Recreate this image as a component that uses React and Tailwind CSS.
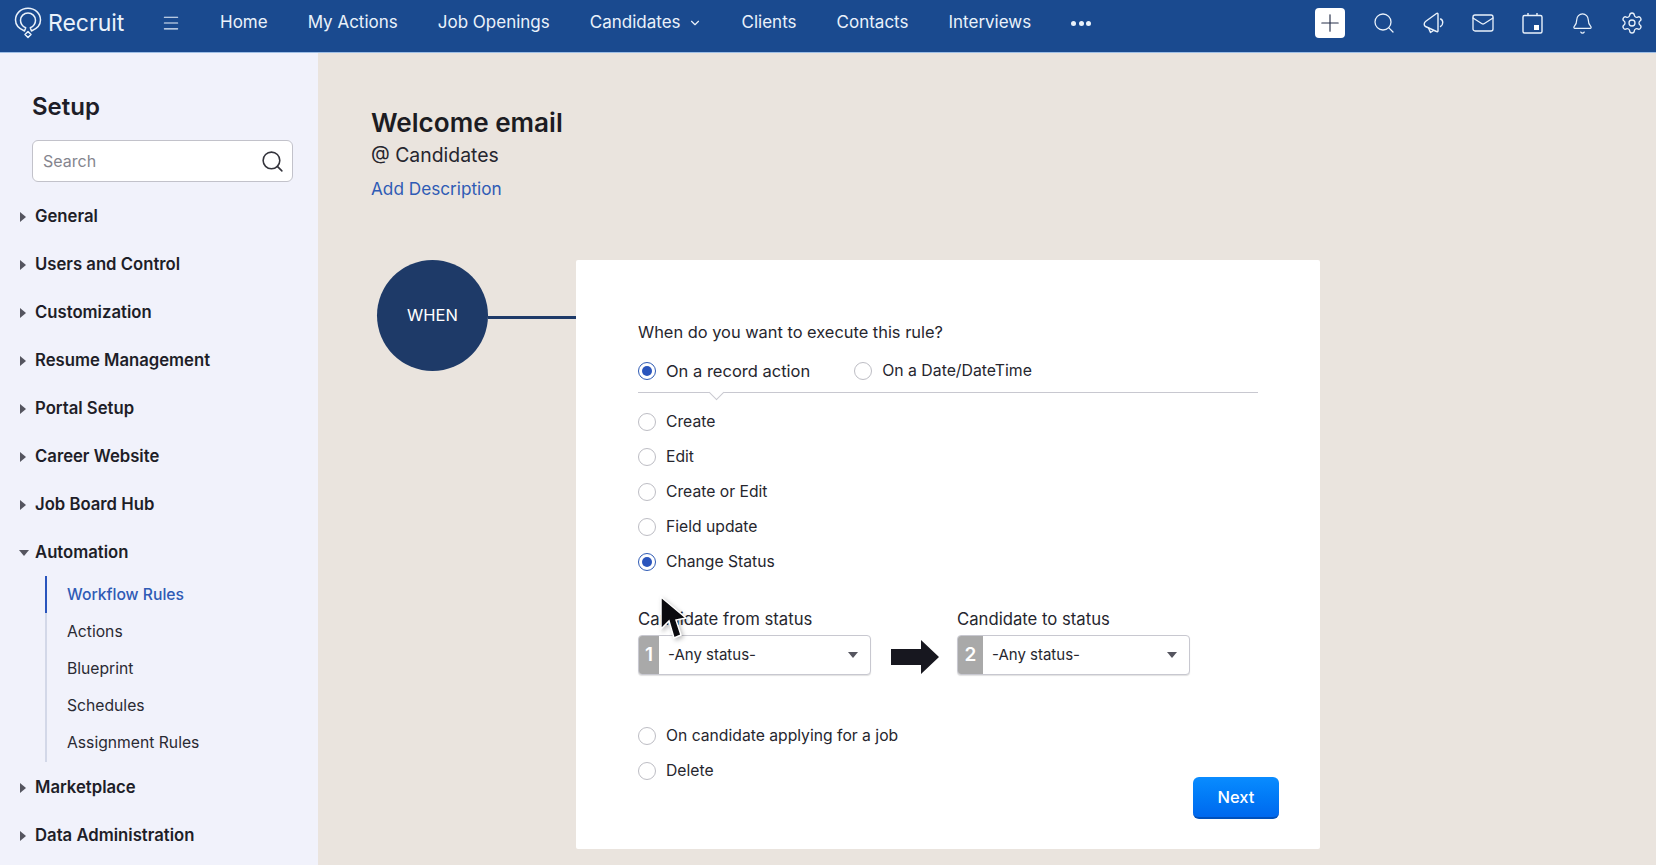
import { ChevronDown, Search, Mail, Bell, Settings, Menu, Plus } from 'lucide-react';

const FONT = "font-['Inter','Noto_Sans',sans-serif]";

const NAV_ITEMS = ['Home', 'My Actions', 'Job Openings'];
const NAV_ITEMS_AFTER = ['Clients', 'Contacts', 'Interviews'];

const SIDE_TOP = ['General', 'Users and Control', 'Customization', 'Resume Management', 'Portal Setup', 'Career Website', 'Job Board Hub'];
const SIDE_SUB = ['Actions', 'Blueprint', 'Schedules', 'Assignment Rules'];
const SIDE_BOTTOM = ['Marketplace', 'Data Administration'];

const RULE_TYPES = [
	{ label: 'Create' },
	{ label: 'Edit' },
	{ label: 'Create or Edit' },
	{ label: 'Field update' },
	{ label: 'Change Status', checked: true },
];

const Logo = () => (
	<svg width="28" height="32" viewBox="0 0 28 32" fill="none" stroke="#eaf2fb" strokeWidth="1.500" strokeLinejoin="round">
		<path d="M10.500 24C4.500 21.500 1.500 17.300 1.500 13C1.500 6.300 7 1.200 14 1.200C21 1.200 26.500 6.300 26.500 13C26.500 17.300 23.500 21.500 17.500 24L16.300 20.800C19.500 19.300 21.500 16.300 21.500 13.200C21.500 9.200 18.200 6 14 6C9.800 6 6.500 9.200 6.500 13.200C6.500 16.300 8.500 19.300 11.700 20.800Z" />
		<path d="M14 24.500L17 27.500L14 30.500L11 27.500Z" />
	</svg>
);

const MegaphoneIcon = () => (
	<svg width="24" height="24" viewBox="0 0 24 24" fill="none" stroke="currentColor" strokeWidth="1.400" strokeLinejoin="round" strokeLinecap="round">
		<path d="M3.500 10.500L14.500 2.500C15.300 2 16 2.500 16 3.300V19.700C16 20.500 15.300 21 14.500 20.500L3.500 15.500C1.800 14.700 1.800 11.800 3.500 10.500Z" />
		<path d="M18.500 8C21.500 9 21.500 14 18.500 15.500" />
		<path d="M6.500 17L8.500 21.500L11.500 19.500" />
	</svg>
);

const CalendarIcon = () => (
	<svg width="23" height="23" viewBox="0 0 23 23" fill="none" stroke="currentColor" strokeWidth="1.400">
		<rect x="2" y="3.500" width="19" height="17.500" rx="1.500" />
		<path d="M7 1v3M16 1v3" />
		<rect x="13" y="13" width="5" height="5" fill="#ffffff" stroke="none" />
	</svg>
);

const Caret = ({ open }) => (
	<span
		className={
			open
				? 'w-0 h-0 border-x-[5px] border-x-transparent border-t-[6px] border-t-[#55555f]'
				: 'w-0 h-0 border-y-[5px] border-y-transparent border-l-[6px] border-l-[#55555f] ml-[1px]'
		}
	/>
);

const SideGroup = ({ label, open }) => (
	<li className="flex items-center h-12">
		<span className="w-[35px] pl-[19px] flex items-center">
			<Caret open={open} />
		</span>
		<span className="text-[16.700px] font-semibold text-[#1e1e28]">{label}</span>
	</li>
);

const Radio = ({ checked, label, size = 'text-[15.700px]' }) => (
	<label className={`flex items-center gap-[10px] leading-[24px] text-[#26262e] ${size}`}>
		<span
			className={
				checked
					? 'w-[18px] h-[18px] rounded-full border border-[#2f5bb5] flex items-center justify-center'
					: 'w-[18px] h-[18px] rounded-full border border-[#bdbdc4] bg-white'
			}
		>
			{checked && <span className="w-[10px] h-[10px] rounded-full bg-[#2a55bd]" />}
		</span>
		{label}
	</label>
);

const StatusSelect = ({ num, label, numWidth }) => (
	<div className="w-[233px]">
		<div className="text-[16.700px] text-[#26262e] leading-[24px]">{label}</div>
		<div className="mt-1 h-[40px] flex items-stretch bg-white border border-[#c8c8d0] rounded-[4px] overflow-hidden shadow-[0_1px_1px_rgba(0,0,0,0.12)]">
			<span className={`${numWidth} bg-[#a9a9a9] text-white font-semibold text-[19px] flex items-center justify-center`}>{num}</span>
			<span className="flex-1 pl-[9px] flex items-center text-[15px] text-[#26262e]">-Any status-</span>
			<span className="pr-3 flex items-center">
				<span className="w-0 h-0 border-x-[5px] border-x-transparent border-t-[6px] border-t-[#55555f]" />
			</span>
		</div>
	</div>
);

const Header = () => (
	<header className="h-[53px] bg-[#1a4a8f] border-b border-[#9fbfe6] flex items-center pl-[14px] pr-[12px] pb-[6px] text-[#eaf2fb]">
		<Logo />
		<span className="ml-[6px] text-[23px] w-[76px]">Recruit</span>
		<Menu size={20} strokeWidth={1.300} className="ml-[37px]" />
		<nav className="ml-[39px] flex items-center gap-10 text-[17px]">
			{NAV_ITEMS.map((item) => (
				<span key={item}>{item}</span>
			))}
			<span className="flex items-center gap-[7px]">
				Candidates
				<ChevronDown size={14} strokeWidth={2} />
			</span>
			{NAV_ITEMS_AFTER.map((item) => (
				<span key={item}>{item}</span>
			))}
			<span className="flex items-center gap-[2.500px]">
				<span className="w-[5px] h-[5px] rounded-full bg-[#eaf2fb]" />
				<span className="w-[5px] h-[5px] rounded-full bg-[#eaf2fb]" />
				<span className="w-[5px] h-[5px] rounded-full bg-[#eaf2fb]" />
			</span>
		</nav>
		<div className="ml-auto flex items-center gap-[25.600px]">
			<span className="w-[30px] h-[30px] bg-white rounded-[4px] flex items-center justify-center mr-[1px]">
				<Plus size={28} strokeWidth={1} className="text-[#26304a]" />
			</span>
			<span className="w-6 flex justify-center"><Search size={26} strokeWidth={1.300} /></span>
			<span className="w-6 flex justify-center"><MegaphoneIcon /></span>
			<span className="w-6 flex justify-center"><Mail size={24} strokeWidth={1.300} /></span>
			<span className="w-6 flex justify-center"><CalendarIcon /></span>
			<span className="w-6 flex justify-center"><Bell size={23} strokeWidth={1.300} /></span>
			<span className="w-6 flex justify-center"><Settings size={24} strokeWidth={1.300} /></span>
		</div>
	</header>
);

const Sidebar = () => (
	<aside className="w-[318px] shrink-0 bg-[#f1f2fb] overflow-hidden">
		<h2 className="mt-[39px] ml-8 text-[24px] leading-[30px] font-semibold text-[#1e1e28]">Setup</h2>
		<div className="mt-[18px] ml-8 w-[261px] h-[42px] bg-white border border-[#c2c2ca] rounded-[6px] flex items-center justify-between pl-[10px] pr-[7px]">
			<span className="text-[16px] text-[#85858e]">Search</span>
			<Search size={25} strokeWidth={1.500} className="text-[#34343c]" />
		</div>
		<ul className="mt-[11px]">
			{SIDE_TOP.map((item) => (
				<SideGroup key={item} label={item} />
			))}
			<SideGroup label="Automation" open />
		</ul>
		<ul className="ml-[45px] border-l-2 border-[#d3d8e8] pb-[1px] -mt-[1px]">
			<li className="-ml-[2px] h-[37px] border-l-2 border-[#2a55bd] pl-[20px] flex items-center text-[15.700px] font-medium text-[#2f5bb5]">Workflow Rules</li>
			{SIDE_SUB.map((item) => (
				<li key={item} className="h-[37px] pl-[20px] flex items-center text-[15.700px] text-[#2a2a33]">{item}</li>
			))}
		</ul>
		<ul className="mt-[2px]">
			{SIDE_BOTTOM.map((item) => (
				<SideGroup key={item} label={item} />
			))}
		</ul>
	</aside>
);

const RuleCard = () => (
	<section className="w-[744px] h-[589px] bg-white rounded-[2px] pt-[59px] px-[62px] relative">
		<p className="text-[16.400px] leading-[26px] text-[#26262e]">When do you want to execute this rule?</p>
		<div className="mt-[15px] flex items-center gap-[44px] pb-[10px] h-[33px] border-b border-[#c8c8d0] w-[620px] relative">
			<Radio checked label="On a record action" size="text-[16.500px]" />
			<Radio label="On a Date/DateTime" size="text-[15.800px]" />
			<span className="absolute left-[73px] bottom-[-6px] w-[11px] h-[11px] rotate-45 bg-white border-r border-b border-[#c8c8d0]" />
		</div>
		<div className="mt-[17px] flex flex-col gap-[11px]">
			{RULE_TYPES.map((item) => (
				<Radio key={item.label} checked={item.checked} label={item.label} />
			))}
		</div>
		<div className="mt-[33px] flex items-end">
			<StatusSelect num="1" numWidth="w-[20px]" label="Candidate from status" />
			<svg width="48" height="34" viewBox="0 0 48 34" className="ml-5 mb-[1px] shrink-0" fill="#17171f">
				<path d="M0 9H30V0L48 17L30 34V25H0Z" />
			</svg>
			<div className="ml-[18px]">
				<StatusSelect num="2" numWidth="w-[25px]" label="Candidate to status" />
			</div>
		</div>
		<div className="mt-[49px] flex flex-col gap-[11px]">
			<Radio label="On candidate applying for a job" />
			<Radio label="Delete" />
		</div>
		<button className="absolute right-[41px] bottom-[30px] w-[86px] h-[42px] rounded-[6px] bg-gradient-to-b from-[#0a8cff] to-[#0068ee] border-b-2 border-[#0050bb] text-white text-[16.500px] font-medium">
			Next
		</button>
	</section>
);

const Cursor = () => (
	<svg width="30" height="48" viewBox="0 0 30 48" className="absolute left-[659px] top-[595px] drop-shadow-[2px_2px_2px_rgba(0,0,0,0.25)]">
		<path d="M2 2V34L10 26L15 43L22 40L17 25L27 23Z" fill="#0b0b0f" stroke="#ffffff" strokeWidth="1.500" />
	</svg>
);

const App = () => {
	return (
		<div className={`${FONT} relative w-[1656px] h-[865px] overflow-hidden flex flex-col bg-[#eae4de]`}>
			<Header />
			<div className="flex-1 flex min-h-0">
				<Sidebar />
				<main className="flex-1 pl-[53px]">
					<h1 className="mt-[53px] text-[26.100px] leading-[34px] font-semibold text-[#1c1c22]">Welcome email</h1>
					<p className="mt-[1px] text-[19.400px] leading-[28px] text-[#26262e]">@ Candidates</p>
					<p className="mt-[8px] text-[17.200px] leading-[24px] text-[#2f5bb5]">Add Description</p>
					<div className="mt-[59px] ml-[6px] flex items-start">
						<div className="w-[111px] h-[111px] rounded-full bg-[#1e3a68] flex items-center justify-center text-white text-[16.500px]">WHEN</div>
						<div className="w-[88px] h-[3px] mt-[56px] bg-[#1e3a68]" />
						<RuleCard />
					</div>
				</main>
			</div>
			<Cursor />
		</div>
	);
};
export default App;
